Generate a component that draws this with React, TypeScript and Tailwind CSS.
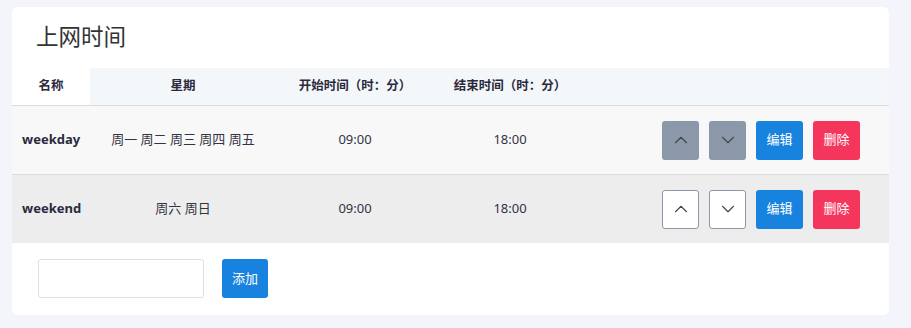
import { ChevronUp, ChevronDown } from 'lucide-react';

const rows = [
  { name: 'weekday', days: '周一 周二 周三 周四 周五', start: '09:00', end: '18:00', filled: true },
  { name: 'weekend', days: '周六 周日', start: '09:00', end: '18:00', filled: false },
];

const cols = 'grid grid-cols-[78px_186px_158px_152px_1fr]';

export default function App() {
  return (
    <div className="min-h-[328px] bg-[#f4f5fa] pt-[7px] pl-3 pr-[22px] font-['Noto_Sans','Noto_Sans_CJK_SC',sans-serif] text-[#333344]">
      <div className="bg-white rounded-md overflow-hidden h-[308px]">
        {/* Title */}
        <div className="h-[61px] flex items-center pl-6">
          <h1 className="text-[22.5px] text-[#333] leading-none">上网时间</h1>
        </div>

        {/* Header */}
        <div className={`${cols} h-[38px] border-b border-[#dcdcdc] text-[12.5px] font-bold text-[#2a2a3c]`}>
          <div className="flex items-center justify-center bg-white">名称</div>
          <div className="flex items-center justify-center bg-[#f4f7fa]">星期</div>
          <div className="flex items-center justify-center bg-[#f4f7fa]">开始时间（时：分）</div>
          <div className="flex items-center justify-center bg-[#f4f7fa]">结束时间（时：分）</div>
          <div className="bg-[#f4f7fa]" />
        </div>

        {/* Rows */}
        {rows.map((r, i) => (
          <div
            key={r.name}
            className={`${cols} text-[13px] ${i === 0 ? 'bg-[#f8f8f8] border-b border-[#dcdcdc] h-[69px]' : 'bg-[#ededed] h-[68px]'}`}
          >
            <div className="flex items-center pl-[10px] font-bold text-[#2a2a40]">{r.name}</div>
            <div className="flex items-center justify-center">{r.days}</div>
            <div className="flex items-center justify-center">{r.start}</div>
            <div className="flex items-center justify-center">{r.end}</div>
            <div className="flex items-center justify-end gap-[10px] pr-[29px]">
              <button
                className={`w-[37px] h-[39px] rounded-[3px] flex items-center justify-center ${r.filled ? 'bg-[#8a98aa]' : 'bg-white border border-[#8a98aa]'}`}
              >
                <ChevronUp size={22} strokeWidth={1.2} className="text-[#444]" />
              </button>
              <button
                className={`w-[37px] h-[39px] rounded-[3px] flex items-center justify-center ${r.filled ? 'bg-[#8a98aa]' : 'bg-white border border-[#8a98aa]'}`}
              >
                <ChevronDown size={22} strokeWidth={1.2} className="text-[#444]" />
              </button>
              <button className="w-[47px] h-[39px] rounded-[3px] bg-[#1883de] text-white text-[13px]">编辑</button>
              <button className="w-[47px] h-[39px] rounded-[3px] bg-[#f5365c] text-white text-[13px]">删除</button>
            </div>
          </div>
        ))}

        {/* Add */}
        <div className="flex items-center gap-[18px] pl-[26px] pt-4">
          <input className="w-[166px] h-[39px] border border-[#dcdfe6] rounded-[3px] outline-none px-2 text-[13px]" />
          <button className="w-[46px] h-[39px] rounded-[3px] bg-[#1883de] text-white text-[13px]">添加</button>
        </div>
      </div>
    </div>
  );
}
